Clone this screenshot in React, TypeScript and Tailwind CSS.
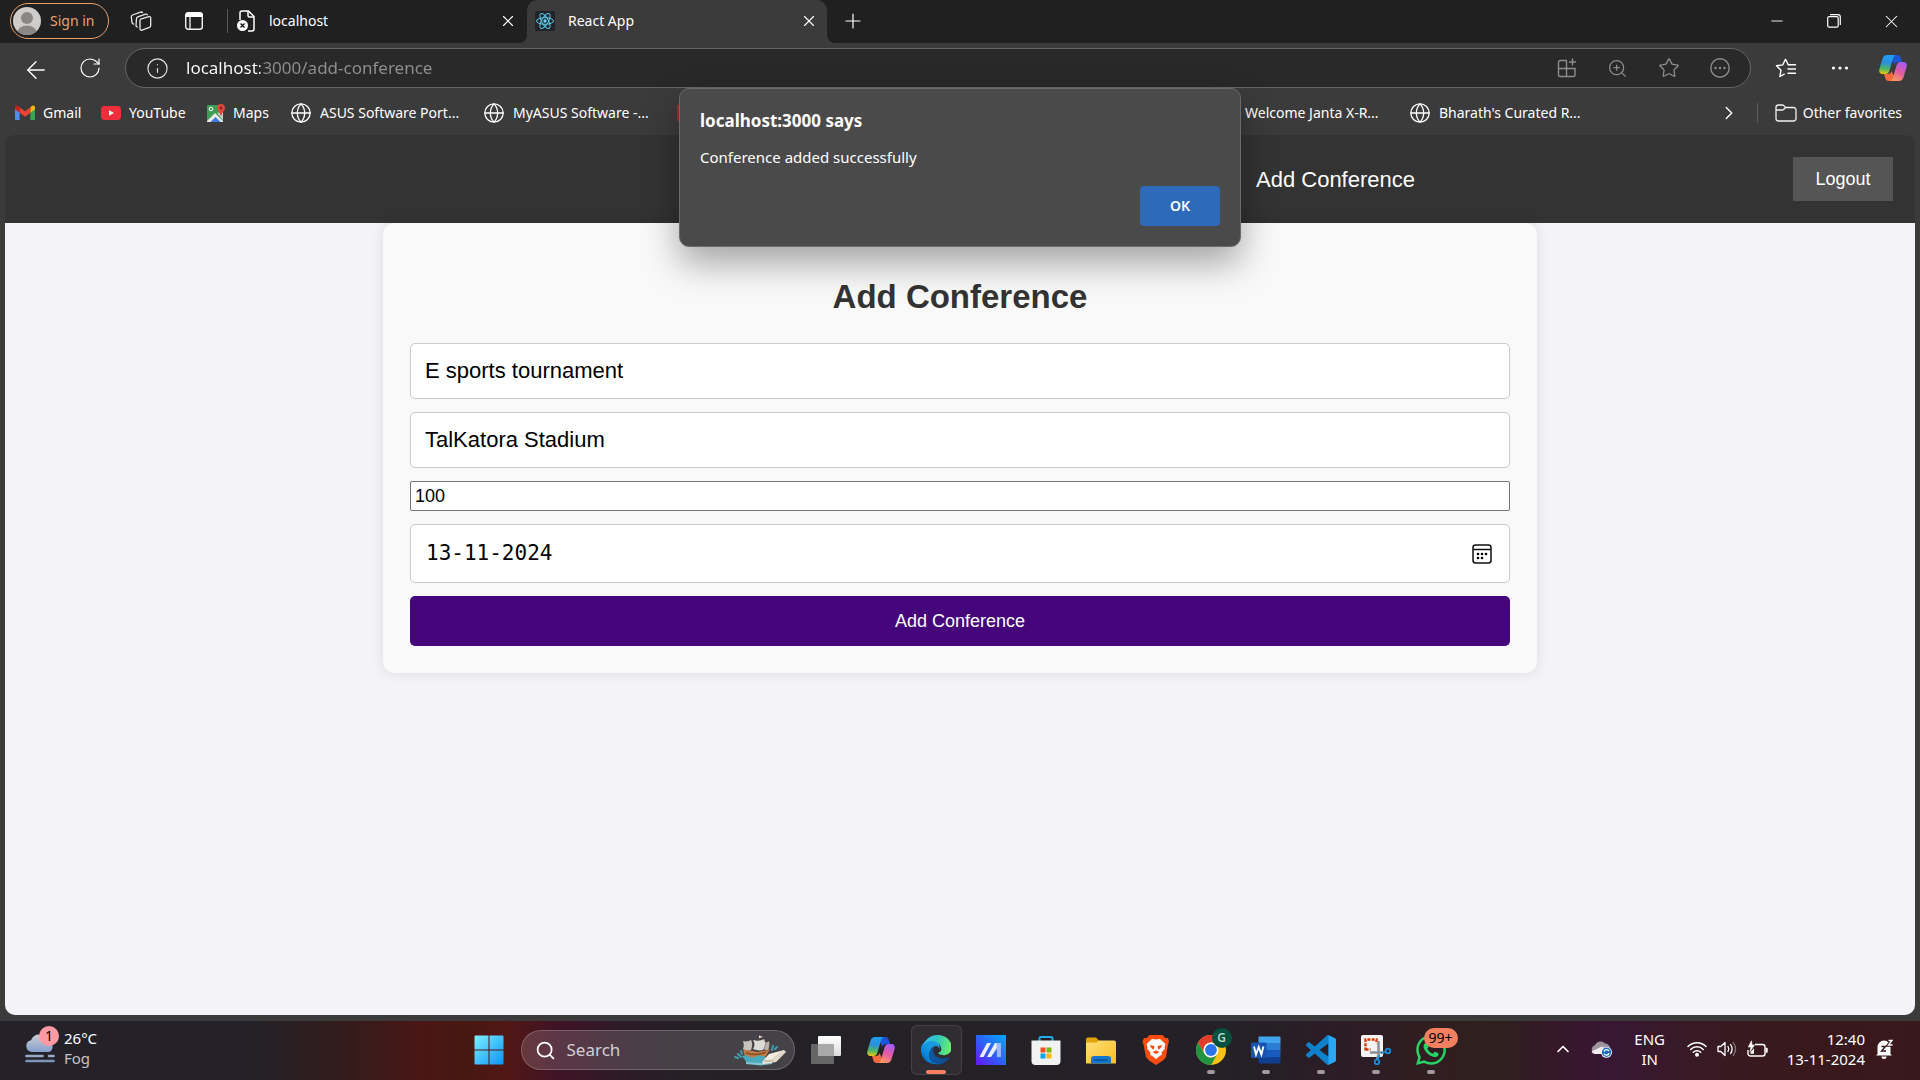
import React, { useId, useState } from "react";
import {
  ArrowLeft,
  ChevronRight,
  ChevronUp,
  Globe,
  Info,
  Minus,
  Plus,
  RotateCw,
  Search,
  Star,
  X,
  ZoomIn,
} from "lucide-react";
import { SiWhatsapp } from "react-icons/si";

/* ---------- browser icons ---------- */

function AvatarIcon() {
  return (
    <svg viewBox="0 0 28 28" className="size-7" aria-hidden="true">
      <defs>
        <clipPath id="avatar">
          <circle cx="14" cy="14" r="14" />
        </clipPath>
      </defs>
      <g clipPath="url(#avatar)">
        <rect width="28" height="28" fill="#cfcdcb" />
        <circle cx="14" cy="11" r="6" fill="#8a8886" />
        <ellipse cx="14" cy="26" rx="10" ry="7.5" fill="#8a8886" />
      </g>
    </svg>
  );
}

function WorkspacesIcon() {
  return (
    <svg viewBox="0 0 22 22" className="size-[22px]" fill="none" stroke="#e8e8e8" strokeWidth="1.3" strokeLinejoin="round" strokeLinecap="round" aria-hidden="true">
      <path d="M10.6 9.2 18.8 6.6c1-.3 1.9.3 1.9 1.3v7.7c0 .8-.5 1.5-1.2 1.7l-7.5 2.8c-1 .4-2-.2-2-1.3v-7.7c0-.9.2-1.6.6-1.9Z" />
      <path d="M7.2 16.9c-.8-.1-1.3-.8-1.2-1.7l.5-6.7c.1-.8.6-1.4 1.4-1.7l7.6-2.7c.9-.2 1.5.1 1.8.7" />
      <path d="M3.6 14.2c-.8-.2-1.5-.9-1.6-1.8L1.3 6.9c-.1-.9.4-1.6 1.2-1.9l8-2.9c1-.3 1.7 0 2.1.5" />
    </svg>
  );
}

function TabActionsIcon() {
  return (
    <svg viewBox="0 0 20 20" className="size-5" aria-hidden="true">
      <rect x="1.7" y="1.7" width="16.6" height="16.6" rx="2.5" fill="none" stroke="#f2f2f2" strokeWidth="1.4" />
      <path d="M1.5 3.5a2 2 0 0 1 2-2h13a2 2 0 0 1 2 2V6h-17Z" fill="#fff" />
      <path d="M6 6v12" stroke="#f2f2f2" strokeWidth="1.3" />
    </svg>
  );
}

function BrokenPageIcon() {
  return (
    <svg viewBox="0 0 20 22" className="h-[22px] w-5" fill="none" aria-hidden="true">
      <path d="M4 10V3a2 2 0 0 1 2-2h6.5L18 6.5V19a2 2 0 0 1-2 2h-4" stroke="#fff" strokeWidth="1.5" />
      <path d="M12 1v4.5c0 .8.6 1.5 1.5 1.5H18" stroke="#fff" strokeWidth="1.5" />
      <circle cx="6.5" cy="15.5" r="5.5" fill="#fff" />
      <path d="m4.5 13.5 4 4m0-4-4 4" stroke="#202020" strokeWidth="1.5" />
    </svg>
  );
}

function ReactIcon() {
  return (
    <svg viewBox="0 0 20 20" className="size-5" aria-hidden="true">
      <rect width="20" height="20" rx="1.5" fill="#20232a" />
      <g fill="none" stroke="#61c9e8" strokeWidth="1">
        <ellipse cx="10" cy="10" rx="8.5" ry="3.3" />
        <ellipse cx="10" cy="10" rx="8.5" ry="3.3" transform="rotate(60 10 10)" />
        <ellipse cx="10" cy="10" rx="8.5" ry="3.3" transform="rotate(120 10 10)" />
      </g>
      <circle cx="10" cy="10" r="1.7" fill="#61dafb" />
    </svg>
  );
}

function AppsPlusIcon() {
  return (
    <svg viewBox="0 0 20 20" className="size-5" fill="none" stroke="#8d8d8d" strokeWidth="1.4" strokeLinecap="round" aria-hidden="true">
      <path d="M9.5 2.5H3a1.5 1.5 0 0 0-1.5 1.5v13A1.5 1.5 0 0 0 3 18.5h13.5A1.5 1.5 0 0 0 18 17v-6.500H1.5M9.5 2.5v16M15.5 1v6M12.5 4h6" />
    </svg>
  );
}

function CircleDotsIcon() {
  return (
    <svg viewBox="0 0 20 20" className="size-5" fill="none" aria-hidden="true">
      <circle cx="10" cy="10" r="9.2" stroke="#8d8d8d" strokeWidth="1.4" />
      <g fill="#8d8d8d">
        <circle cx="5.500" cy="10" r="1.2" />
        <circle cx="10" cy="10" r="1.2" />
        <circle cx="14.5" cy="10" r="1.2" />
      </g>
    </svg>
  );
}

function FavoritesIcon() {
  return (
    <svg viewBox="0 0 22 20" className="h-5 w-[22px]" fill="none" stroke="#fff" strokeWidth="1.4" strokeLinejoin="round" strokeLinecap="round" aria-hidden="true">
      <path d="M13.3 6.7 10.5 1.3 7.7 6.9 1.5 7.8 6 12.2 4.9 18.5 9.2 16.2" />
      <path d="M13.3 6.7h7.2M13 11h7.5M13 15.2h7.5" />
    </svg>
  );
}

function MoreIcon() {
  return (
    <svg viewBox="0 0 20 20" className="size-5" fill="#fff" aria-hidden="true">
      <circle cx="3.5" cy="10" r="1.6" />
      <circle cx="10" cy="10" r="1.6" />
      <circle cx="16.5" cy="10" r="1.6" />
    </svg>
  );
}

function CopilotIcon() {
  const id = useId();
  return (
    <svg viewBox="0 0 28 26" className="h-[26px] w-7" aria-hidden="true">
      <defs>
        <linearGradient id={id + "a"} x1="0.4" y1="0" x2="0.3" y2="1">
          <stop offset="0" stopColor="#1fa0ee" />
          <stop offset="0.4" stopColor="#2a8ee0" />
          <stop offset="0.75" stopColor="#55b95a" />
          <stop offset="1" stopColor="#f2c811" />
        </linearGradient>
        <linearGradient id={id + "b"} x1="0.7" y1="0" x2="0.3" y2="1">
          <stop offset="0" stopColor="#a55cf0" />
          <stop offset="0.5" stopColor="#e45aa5" />
          <stop offset="1" stopColor="#fb9a5c" />
        </linearGradient>
      </defs>
      <path d="M14 0h4.5c1.7 0 2.7 1 3.2 2.7L23 7h-4c-2 0-3 1-3.5 3L13 5Z" fill="#1b55d8" />
      <path d="M14 26H9.5c-1.7 0-2.7-1-3.2-2.7L5 19h4c2 0 3-1 3.5-3l2.5 5Z" fill="#f26a3d" />
      <path d="M8 0h9c-1.8.2-2.4 1.5-3 3.5l-3.5 12C9.8 18 8.5 19 6.5 19H3.5C.8 19-.3 16.7.4 14L3.6 3.5C4.3 1.3 5.7 0 8 0Z" fill={`url(#${id}a)`} />
      <path d="M20 26h-9c1.8-.2 2.4-1.5 3-3.5l3.5-12C18.2 8 19.5 7 21.5 7h3c2.7 0 3.8 2.3 3.1 5l-3.2 10.5c-.7 2.2-2.1 3.5-4.4 3.5Z" fill={`url(#${id}b)`} />
    </svg>
  );
}

function RestoreIcon() {
  return (
    <svg viewBox="0 0 14 14" className="size-3.5" fill="none" stroke="#fff" strokeWidth="1.2" aria-hidden="true">
      <rect x="0.7" y="2.7" width="10.5" height="10.5" rx="1.5" />
      <path d="M3 .7h8a2.3 2.3 0 0 1 2.3 2.3v8" />
    </svg>
  );
}

function GmailIcon() {
  return (
    <svg viewBox="0 0 20 15" className="h-[15px] w-5" aria-hidden="true">
      <path d="M0 2.5V14a1 1 0 0 0 1 1h3.6V6Z" fill="#4f8df5" />
      <path d="M20 2.5V14a1 1 0 0 1-1 1h-3.6V6Z" fill="#34a853" />
      <path d="M15.4 2.2 17 1c1.3-.9 3-.1 3 1.5v1.7L15.4 7.7Z" fill="#fbbc04" />
      <path d="M4.6 2.2 3 1C1.7.1 0 .9 0 2.5v1.7l4.6 3.5Z" fill="#c5221f" />
      <path d="M4.6 2.2 10 6.3l5.4-4.1v5.5L10 11.8 4.6 7.7Z" fill="#ea4335" />
    </svg>
  );
}

function YouTubeIcon() {
  return (
    <svg viewBox="0 0 20 14" className="h-3.5 w-5" aria-hidden="true">
      <rect width="20" height="14" rx="3.5" fill="#ee2f3b" />
      <path d="m8 4.2 5 2.8-5 2.8Z" fill="#fff" />
    </svg>
  );
}

function MapsIcon() {
  return (
    <svg viewBox="0 0 18 18" className="size-[18px]" aria-hidden="true">
      <rect y="1" width="16" height="17" rx="1" fill="#3f9b55" />
      <path d="m0 17 8-8 8 8v1H0Z" fill="#e8e8e8" />
      <path d="m3.5 18 5-5 5 5Z" fill="#3d78e0" />
      <path d="m10 9 6 7V8Z" fill="#cfd3d6" />
      <circle cx="4" cy="5" r="1.8" fill="none" stroke="#fff" />
      <path d="M14 0a4 4 0 0 1 4 4c0 2.5-3 4-3.6 8h-.8C13 8 10 6.500 10 4a4 4 0 0 1 4-4Z" fill="#e0483c" />
      <circle cx="14" cy="4" r="1.4" fill="#8f231b" />
    </svg>
  );
}

function FolderOutlineIcon() {
  return (
    <svg viewBox="0 0 22 20" className="h-5 w-[22px]" fill="none" stroke="#f2f2f2" strokeWidth="1.3" strokeLinejoin="round" aria-hidden="true">
      <path d="M1 4.500A2.500 2.500 0 0 1 3.500 2h3.800c.6 0 1.100.2 1.500.6L10.700 4.500h7.800A2.500 2.500 0 0 1 21 7v8.500a2.500 2.500 0 0 1-2.500 2.500h-15A2.500 2.500 0 0 1 1 15.500ZM1 7h6c.7 0 1.300-.2 1.800-.7l1.900-1.800" />
    </svg>
  );
}

function CalendarIcon() {
  return (
    <svg viewBox="0 0 20 20" className="size-5" aria-hidden="true">
      <rect x="1" y="1" width="18" height="18" rx="2.5" fill="none" stroke="#111" strokeWidth="1.5" />
      <path d="M1 5.500h18" stroke="#111" strokeWidth="1.5" />
      <g fill="#000">
        <circle cx="6" cy="10" r="1.3" />
        <circle cx="10" cy="10" r="1.3" />
        <circle cx="14" cy="10" r="1.3" />
        <circle cx="6" cy="14" r="1.3" />
        <circle cx="10" cy="14" r="1.3" />
      </g>
    </svg>
  );
}

/* ---------- taskbar icons ---------- */

function FogIcon() {
  return (
    <svg viewBox="0 0 30 30" className="size-[30px]" aria-hidden="true">
      <defs>
        <linearGradient id="cloud" x1="0" y1="0" x2="0" y2="1">
          <stop offset="0" stopColor="#c9cdd2" />
          <stop offset="1" stopColor="#86a1cf" />
        </linearGradient>
      </defs>
      <path d="M6.500 19A6 6 0 0 1 6 7.200 9 9 0 0 1 23 8a5.800 5.800 0 0 1 1 11Z" fill="url(#cloud)" />
      <path d="M1.500 23h16M24 23h4.500" stroke="#97a9c2" strokeWidth="2.6" strokeLinecap="round" />
      <path d="M1.500 28h27" stroke="#7f93bd" strokeWidth="2.6" strokeLinecap="round" />
    </svg>
  );
}

function StartIcon() {
  return (
    <svg viewBox="0 0 30 30" className="size-[30px]" aria-hidden="true">
      <defs>
        <linearGradient id="win" x1="0" y1="0" x2="1" y2="1">
          <stop offset="0" stopColor="#7df0ff" />
          <stop offset="1" stopColor="#0b93fb" />
        </linearGradient>
      </defs>
      <path d="M1.500.5H14.500v14H.5v-13a1 1 0 0 1 1-1ZM15.500.5h13a1 1 0 0 1 1 1v13h-14ZM.5 15.500H14.500v14H1.500a1 1 0 0 1-1-1ZM15.500 15.500h14v13a1 1 0 0 1-1 1h-13Z" fill="url(#win)" />
    </svg>
  );
}

function ShipIcon() {
  return (
    <svg viewBox="0 0 52 32" className="h-8 w-[52px]" aria-hidden="true">
      <path d="M9 15 11 23c3 3 17 3 21-1l4-7-12 3Z" fill="#c07a42" />
      <path d="M12 19c6 2 14 2 20-1" stroke="#8a4f27" strokeWidth="1.5" fill="none" />
      <path d="M25 2v16M14 7v11M33 7v10" stroke="#6b4a32" strokeWidth="1" />
      <path d="M25 1.500 29 3l-4 1Z" fill="#eee" />
      <path d="M19 6c4 1 8 1 11-1 2 4 1 8-1 11-4 1-7 0-10-1 2-3 2-6 0-9Z" fill="#ddd9d4" />
      <path d="M9 7c3 1 6 0 8-1 2 4 1 7 0 10-3 1-5 0-8-1 1-3 1-5 0-8Z" fill="#c9c3bd" />
      <path d="M31 8c2 1 3 0 4-1 1 4 0 6-1 9-2 0-3 0-4-1 1-3 2-4 1-7Z" fill="#b9b1aa" />
      <path d="M8 22c6-3 8 3 13 1 4-3 9-1 12 1l-6 6-14-1Z" fill="#4aa9bd" />
      <path d="m4 20 3 3M1 23l3 1M7 17l1 3M38 16l1-4M41 15l2-2" stroke="#3f9fb5" strokeWidth="2" strokeLinecap="round" />
      <path d="m12 28 16 1 10-1v2l-11 1.500-15-1.500Z" fill="#7fc4cf" />
      <path d="m28 28 7-8 15-4 2 2-10 10-13 2Z" fill="#f1ece0" />
      <path d="m30 28 10-1 11-9M29 27l9-1 11-9" stroke="#b9ad97" strokeWidth=".8" fill="none" />
    </svg>
  );
}

function TaskViewIcon() {
  return (
    <svg viewBox="0 0 30 28" className="h-7 w-[30px]" aria-hidden="true">
      <defs>
        <linearGradient id="tv" x1="0" y1="0" x2="0" y2="1">
          <stop offset="0" stopColor="#ffffff" />
          <stop offset="1" stopColor="#dcdcdc" />
        </linearGradient>
      </defs>
      <rect y="8" width="23" height="20" rx="1" fill="#666" />
      <rect x="7" width="23" height="20" rx="1" fill="url(#tv)" />
      <path d="M7 8h16v12H7Z" fill="#a9a9a9" />
    </svg>
  );
}

function EdgeIcon() {
  return (
    <svg viewBox="0 0 256 256" className="size-[30px]" aria-hidden="true">
      <defs>
        <linearGradient id="edgeA" x1="63" y1="177" x2="241" y2="177" gradientUnits="userSpaceOnUse">
          <stop offset="0" stopColor="#0c59a4" />
          <stop offset="1" stopColor="#114a8b" />
        </linearGradient>
        <linearGradient id="edgeB" x1="157" y1="99" x2="46" y2="220" gradientUnits="userSpaceOnUse">
          <stop offset="0" stopColor="#1b9de2" />
          <stop offset="0.5" stopColor="#1595df" />
          <stop offset="1" stopColor="#0078d4" />
        </linearGradient>
        <linearGradient id="edgeC" x1="20" y1="60" x2="245" y2="110" gradientUnits="userSpaceOnUse">
          <stop offset="0" stopColor="#35c1f1" />
          <stop offset="0.45" stopColor="#2ec4c5" />
          <stop offset="1" stopColor="#66eb6e" />
        </linearGradient>
      </defs>
      <path d="M231 190c-3 2-7 3-10 5-11 4-22 6-34 6-45 0-84-31-84-70 0-11 6-21 16-26-41 2-51 44-51 69 0 71 65 78 79 78 8 0 19-2 26-4l1-1c29-9 53-28 69-53a3 3 0 0 0-4-4Z" fill="url(#edgeA)" />
      <path d="M106 241c-9-5-17-12-23-21-27-36-19-88 17-115 4-3 8-5 12-7 3-1 8-4 15-4a30 30 0 0 1 24 12c3 5 6 11 6 17 0-1 25-79-79-79-44 0-80 41-80 78 0 19 4 37 12 54 27 57 92 84 151 65-20 6-39 3-55 0Z" fill="url(#edgeB)" />
      <path d="M152 149c-1 1-4 3-4 6 0 3 2 6 5 8 16 11 45 9 45 9 12 0 23-3 33-9 20-11 32-33 32-56 0-24-8-39-12-46C229 20 186 0 139 0 73 0 19 53 11 118c1-37 37-67 80-67 3 0 23 1 42 10 17 9 26 20 32 30 6 11 8 25 8 30s-3 14-9 21Z" fill="url(#edgeC)" />
    </svg>
  );
}

function AsusIcon() {
  return (
    <svg viewBox="0 0 30 30" className="size-[30px]" aria-hidden="true">
      <defs>
        <linearGradient id="asus" x1="0" y1="1" x2="1" y2="0">
          <stop offset="0" stopColor="#6714f5" />
          <stop offset="0.5" stopColor="#2c63f8" />
          <stop offset="1" stopColor="#08a8ff" />
        </linearGradient>
      </defs>
      <rect width="30" height="30" fill="url(#asus)" />
      <path d="M3.500 22 11 8h4L7.500 22ZM11 22l8-14h5.500v14h-3.500v-9l-6 9Z" fill="#e9efff" />
      <path d="M20.500 8h4v14h-3.500Z" fill="#9eb8fb" />
    </svg>
  );
}

function StoreIcon() {
  return (
    <svg viewBox="0 0 30 30" className="size-[30px]" aria-hidden="true">
      <path d="M8.500 7V3.500a1.500 1.500 0 0 1 1.500-1.500h10a1.500 1.500 0 0 1 1.500 1.500V7" fill="none" stroke="#23aee8" strokeWidth="2" />
      <path d="M.5 5.500h29V26a4 4 0 0 1-4 4h-21a4 4 0 0 1-4-4Z" fill="#f2f2f2" />
      <path d="M9.500 12.500h5v5h-5Z" fill="#f25022" />
      <path d="M15.500 12.500h5v5h-5Z" fill="#7fba00" />
      <path d="M9.500 18.500h5v5h-5Z" fill="#00a4ef" />
      <path d="M15.500 18.500h5v5h-5Z" fill="#ffb900" />
    </svg>
  );
}

function ExplorerIcon() {
  return (
    <svg viewBox="0 0 30 28" className="h-7 w-[30px]" aria-hidden="true">
      <defs>
        <linearGradient id="folder" x1="0" y1="0" x2="1" y2="1">
          <stop offset="0" stopColor="#ffdf7a" />
          <stop offset="1" stopColor="#f9bd20" />
        </linearGradient>
      </defs>
      <path d="M0 3.500A2 2 0 0 1 2 1.500h8l3 3V8H0Z" fill="#e0a30c" />
      <path d="M0 6.500h10.500L13 4.500h15a2 2 0 0 1 2 2V27.500H0Z" fill="url(#folder)" />
      <path d="M5 27.500V23a3 3 0 0 1 3-3h14a3 3 0 0 1 3 3v4.500Z" fill="#1277cf" />
      <path d="M8.500 24h13" stroke="#0b4f96" strokeWidth="1.3" strokeLinecap="round" />
    </svg>
  );
}

function BraveIcon() {
  return (
    <svg viewBox="0 0 30 30" className="size-[30px]" aria-hidden="true">
      <path d="M8.500 0h13l3 3.200 2.500-.2 1 3.500-1 3L25 22l-3 3.500L15 30l-7-4.500L5 22 2.500 9.500l-1-3L3 3l2.500.2Z" fill="#fb4d12" />
      <path d="M15 4.500 19 4l5.500 5-1 3 .5 1.500-3.500 4 .5 2-3 2L15 24l-3-2.500-3-2 .5-2-3.500-4 .5-1.500-1-3L11 4Z" fill="#fff" />
      <path d="m8.500 10 5 1-1 4-2-2ZM21.500 10l-5 1 1 4 2-2ZM11.500 17l3.500-1.500 3.500 1.500L15 19Z" fill="#fb4d12" />
    </svg>
  );
}

function ChromeIcon() {
  return (
    <svg viewBox="0 0 30 30" className="size-[30px]" aria-hidden="true">
      <circle cx="15" cy="15" r="15" fill="#fbc116" />
      <path d="M2 7.500A15 15 0 0 1 28 7.500H15a7.500 7.500 0 0 0-6.500 11.250Z" fill="#e33b2e" />
      <path d="M2 7.500 8.500 18.750A7.500 7.500 0 0 0 15 22.500q3 0 6.500-3.750L15 30A15 15 0 0 1 2 7.500Z" fill="#229342" />
      <circle cx="15" cy="15" r="7.500" fill="#fff" />
      <circle cx="15" cy="15" r="5.900" fill="#2a73e8" />
    </svg>
  );
}

function WordIcon() {
  return (
    <svg viewBox="0 0 30 28" className="h-7 w-[30px]" aria-hidden="true">
      <path d="M7.500.5H28.500a1 1 0 0 1 1 1V7H7.500Z" fill="#41a5ee" />
      <path d="M7.500 7h22v7h-22Z" fill="#2b7cd3" />
      <path d="M7.500 14h22v7h-22Z" fill="#185abd" />
      <path d="M7.500 21h22v5.500a1 1 0 0 1-1 1h-20a1 1 0 0 1-1-1Z" fill="#103f91" />
      <rect y="6.500" width="15.500" height="15.500" rx="1.3" fill="#1a52b0" />
      <path d="m3 10.500 2 8 2.700-7.500 2.700 7.500 2-8" fill="none" stroke="#fff" strokeWidth="1.9" />
    </svg>
  );
}

function CodeIcon() {
  return (
    <svg viewBox="0 0 24 24" className="size-[30px]" aria-hidden="true">
      <path d="M23.150 2.587L18.210.21a1.494 1.494 0 0 0-1.705.29l-9.460 8.630-4.120-3.128a.999.999 0 0 0-1.276.057L.327 7.261A1 1 0 0 0 .326 8.740L3.899 12 .326 15.260a1 1 0 0 0 .001 1.479L1.650 17.940a.999.999 0 0 0 1.276.057l4.120-3.128 9.460 8.630a1.492 1.492 0 0 0 1.704.29l4.942-2.377A1.500 1.500 0 0 0 24 20.060V3.939a1.500 1.500 0 0 0-.85-1.352zm-5.146 14.861L10.826 12l7.178-5.448v10.896z" fill="#0f82cb" />
      <path d="M18 .2 23.150 2.587A1.500 1.500 0 0 1 24 3.939V20.060a1.500 1.500 0 0 1-.85 1.352L18 23.800Z" fill="#2aa6f2" />
    </svg>
  );
}

function SnipIcon() {
  return (
    <svg viewBox="0 0 30 30" className="size-[30px]" fill="none" aria-hidden="true">
      <rect width="22" height="22" rx="2" fill="#f3f3f3" />
      <path d="M4.500 15.500v-11h11v4M4.500 14.500h5" stroke="#d83b01" strokeWidth="2.4" strokeDasharray="3 1.3" />
      <path d="M17.500 6v14l-1.500 4M9 17.500h14" stroke="#8b9197" strokeWidth="2.500" />
      <circle cx="16" cy="27" r="2.3" stroke="#1490df" strokeWidth="1.8" />
      <circle cx="27" cy="16" r="2.3" stroke="#1490df" strokeWidth="1.8" />
      <path d="m17 24 1.500-4M24.500 16.500 20 18" stroke="#1490df" strokeWidth="1.8" />
    </svg>
  );
}

function OneDriveIcon() {
  return (
    <svg viewBox="0 0 22 18" className="h-[18px] w-[22px]" fill="none" aria-hidden="true">
      <path d="M5 14A4.500 4.500 0 0 1 4 5.200 6 6 0 0 1 14 3.500a5 5 0 0 1 5 5L9 14Z" fill="#9d949c" />
      <path d="M4 14a4 4 0 0 1-3.500-2.500L11 6.500 16 10v4Z" fill="#f0eef0" />
      <circle cx="15.500" cy="12.300" r="5.500" fill="#fff" />
      <circle cx="15.500" cy="12.300" r="4.700" fill="#1b6ec2" />
      <path d="M13 11.500a2.700 2.700 0 0 1 5-.5M18 13.200a2.700 2.700 0 0 1-5 .5" stroke="#fff" strokeWidth="1.3" />
    </svg>
  );
}

function WifiIcon() {
  return (
    <svg viewBox="0 0 20 16" className="h-4 w-5" fill="none" stroke="#fff" strokeWidth="1.5" strokeLinecap="round" aria-hidden="true">
      <path d="M1 5.500a12.500 12.500 0 0 1 18 0M3.700 8.500a8.700 8.700 0 0 1 12.600 0M6.300 11.300a5.200 5.200 0 0 1 7.400 0" />
      <circle cx="10" cy="13.800" r="1.2" fill="#fff" />
    </svg>
  );
}

function VolumeIcon() {
  return (
    <svg viewBox="0 0 20 16" className="h-4 w-5" fill="none" stroke="#fff" strokeWidth="1.3" strokeLinecap="round" strokeLinejoin="round" aria-hidden="true">
      <path d="M1 5.500h2.800L8 1.500v13L3.800 10.500H1Z" />
      <path d="M11 5.500q1.600 2.500 0 5M13.600 3.500q3 4.500 0 9" />
      <path d="M16.300 1.500q4.500 6.500 0 13" stroke="#8b7880" />
    </svg>
  );
}

function BatteryIcon() {
  return (
    <svg viewBox="0 0 21 18" className="h-[18px] w-[21px]" fill="none" stroke="#fff" strokeWidth="1.4" strokeLinejoin="round" aria-hidden="true">
      <path d="M8 4.500h7.500A2.500 2.500 0 0 1 18 7v6.500a2.500 2.500 0 0 1-2.500 2.500h-12A2.500 2.500 0 0 1 1 13.500V10" />
      <path d="M18.700 8.500h1.300v3.500h-1.300" fill="#fff" />
      <path d="M4.500.8 1.300 7H4l-1 4.500L7.500 5H5Z" fill="#fff" strokeWidth="0.6" />
      <path d="M3.500 13.800V12L7 8.500v5.300Z" fill="#fff" stroke="none" />
    </svg>
  );
}

function BellIcon() {
  return (
    <svg viewBox="0 0 18 20" className="h-5 w-[18px]" aria-hidden="true">
      <path d="M1.500 15V8a6.500 6.500 0 0 1 13 0v7l1.500 1.500H0ZM5.500 17.500h5a2.500 2.500 0 0 1-5 0Z" fill="#fff" />
      <path d="M12.500 1.500H16l-3.500 4.500h4" fill="none" stroke="#351a1e" strokeWidth="3.4" />
      <path d="M5.500 7.500h4L5.500 12h4.500" fill="none" stroke="#351a1e" strokeWidth="1.4" />
      <path d="M12.500 1.500H16l-3.500 4.500h4" fill="none" stroke="#fff" strokeWidth="1.3" />
    </svg>
  );
}

/* ---------- browser chrome ---------- */

function TabStrip() {
  return (
    <header className="flex h-[43px] shrink-0 items-center bg-[#202020] pb-px text-sm text-white">
      <button className="ml-2.5 flex h-9 w-[99px] items-center gap-[9px] rounded-full border border-[#e8a26c] pl-0.5 text-[#e8a26c]">
        <AvatarIcon />
        Sign in
      </button>
      <button aria-label="Workspaces" className="ml-5 grid size-6 place-items-center">
        <WorkspacesIcon />
      </button>
      <button aria-label="Tab actions" className="ml-[29px] grid size-6 place-items-center">
        <TabActionsIcon />
      </button>
      <span className="ml-[21px] h-6 w-px bg-[#5a5a5a]" />
      <div className="flex w-[299px] items-center pr-[9px] pl-2">
        <BrokenPageIcon />
        <button className="ml-[13px] flex-1 text-left">localhost</button>
        <button aria-label="Close localhost tab" className="grid size-5 place-items-center">
          <X size={18} strokeWidth={1.5} />
        </button>
      </div>
      <div className="relative flex h-[43px] w-[300px] items-center rounded-t-[10px] bg-[#3b3b3b] px-2">
        <svg viewBox="0 0 8 8" className="absolute bottom-0 -left-2 size-2" aria-hidden="true">
          <path d="M8 0v8H0a8 8 0 0 0 8-8Z" fill="#3b3b3b" />
        </svg>
        <svg viewBox="0 0 8 8" className="absolute -right-2 bottom-0 size-2" aria-hidden="true">
          <path d="M0 0v8h8a8 8 0 0 1-8-8Z" fill="#3b3b3b" />
        </svg>
        <ReactIcon />
        <button className="ml-[13px] flex-1 text-left">React App</button>
        <button aria-label="Close React App tab" className="grid size-5 place-items-center">
          <X size={18} strokeWidth={1.5} />
        </button>
      </div>
      <button aria-label="New tab" className="ml-3.5 grid size-6 place-items-center">
        <Plus size={24} strokeWidth={1.2} />
      </button>
      <div className="ml-auto flex h-full">
        <button aria-label="Minimize" className="grid w-[57px] place-items-center">
          <Minus size={18} strokeWidth={1.2} />
        </button>
        <button aria-label="Restore" className="grid w-[57px] place-items-center">
          <RestoreIcon />
        </button>
        <button aria-label="Close" className="grid w-[58px] place-items-center">
          <X size={21} strokeWidth={1.2} />
        </button>
      </div>
    </header>
  );
}

function Toolbar() {
  return (
    <div className="flex h-[50px] shrink-0 items-center text-white">
      <button aria-label="Back" className="ml-[22px] grid size-6 place-items-center">
        <ArrowLeft size={28} strokeWidth={1.2} />
      </button>
      <button aria-label="Refresh" className="ml-8 grid size-6 place-items-center">
        <RotateCw size={24} strokeWidth={1.2} />
      </button>
      <div className="ml-[23px] flex h-10 flex-1 items-center rounded-full border border-[#666] bg-[#292929] pr-5 pl-5 text-[#8d8d8d]">
        <button aria-label="Site information" className="text-[#e4e4e4]">
          <Info size={23} strokeWidth={1.2} />
        </button>
        <input
          aria-label="Address"
          defaultValue="localhost:3000/add-conference"
          className="ml-[17px] flex-1 bg-[linear-gradient(90deg,#fff_74px,#8f8f8f_74px)] bg-clip-text text-[17px] text-transparent outline-none"
        />
        <div className="flex items-center gap-[30px]">
          <button aria-label="App available">
            <AppsPlusIcon />
          </button>
          <button aria-label="Zoom">
            <ZoomIn size={21} strokeWidth={1.4} />
          </button>
          <button aria-label="Add to favorites">
            <Star size={22} strokeWidth={1.4} />
          </button>
          <button aria-label="More page actions">
            <CircleDotsIcon />
          </button>
        </div>
      </div>
      <button aria-label="Favorites" className="ml-6">
        <FavoritesIcon />
      </button>
      <button aria-label="Settings and more" className="ml-[33px]">
        <MoreIcon />
      </button>
      <button aria-label="Copilot" className="mr-[13px] ml-[29px]">
        <CopilotIcon />
      </button>
    </div>
  );
}

function Bookmark({ icon, label, width }: { icon: React.ReactNode; label: string; width: string }) {
  return (
    <a href="#" className={`flex shrink-0 items-center gap-2 whitespace-nowrap ${width}`}>
      {icon}
      {label}
    </a>
  );
}

function BookmarksBar() {
  const globe = <Globe size={22} strokeWidth={1.4} className="shrink-0" />;
  return (
    <nav aria-label="Favorites bar" className="flex h-[42px] shrink-0 items-center pr-[18px] pb-[3px] pl-[15px] text-sm text-white">
      <Bookmark icon={<GmailIcon />} label="Gmail" width="w-[86px]" />
      <Bookmark icon={<YouTubeIcon />} label="YouTube" width="w-[106px]" />
      <Bookmark icon={<MapsIcon />} label="Maps" width="w-[83px]" />
      <Bookmark icon={globe} label="ASUS Software Port..." width="w-[193px]" />
      <Bookmark icon={globe} label="MyASUS Software -..." width="w-[194px]" />
      <span className="h-4 w-5 shrink-0 bg-[#a52a2a]" />
      <span className="w-[518px] shrink-0" />
      <Bookmark icon={globe} label="Welcome Janta X-R..." width="w-[194px]" />
      <Bookmark icon={globe} label="Bharath's Curated R..." width="w-[193px]" />
      <button aria-label="Show more favorites" className="ml-auto">
        <ChevronRight size={22} strokeWidth={1.5} />
      </button>
      <span className="mx-[17px] h-5 w-px bg-[#5c5c5c]" />
      <button className="flex items-center gap-1.5">
        <FolderOutlineIcon />
        Other favorites
      </button>
    </nav>
  );
}

/* ---------- page ---------- */

function SiteNav() {
  return (
    <nav aria-label="Site" className="flex h-[88px] shrink-0 items-center justify-between bg-[#333] pr-[22px] text-white">
      <div className="flex w-3/4 justify-end pr-1.5">
        <a href="#" className="text-[22px]">
          Add Conference
        </a>
      </div>
      <button className="h-11 w-[100px] bg-[#555] text-lg">Logout</button>
    </nav>
  );
}

function ConferenceForm() {
  const field = "w-full rounded-[5px] border border-[#ccc] bg-white px-3.5 text-[22px] text-black";
  return (
    <form
      onSubmit={(e) => e.preventDefault()}
      className="mx-auto flex w-full max-w-[1154px] flex-col gap-[13px] rounded-xl bg-[#f9f9f9] px-[27px] pb-[27px] shadow-[0_0_14px_rgba(0,0,0,0.1)]"
    >
      <h1 className="pt-[54px] pb-[13px] text-center text-[33px] leading-10 font-bold text-[#333]">Add Conference</h1>
      <input aria-label="Conference name" defaultValue="E sports tournament" className={`${field} h-14`} />
      <input aria-label="Location" defaultValue="TalKatora Stadium" className={`${field} h-14`} />
      <input
        aria-label="Price"
        type="number"
        defaultValue="100"
        className="h-[30px] w-full rounded-xs border border-[#767676] bg-white px-1 text-lg text-black"
      />
      <div className="flex h-[59px] items-center rounded-[5px] border border-[#ccc] bg-white pr-[17px] pl-[15px]">
        <input
          aria-label="Date"
          defaultValue="13-11-2024"
          className="min-w-0 flex-1 font-['DejaVu_Sans_Mono','Liberation_Mono',monospace] text-[21px] text-black outline-none"
        />
        <button type="button" aria-label="Open calendar">
          <CalendarIcon />
        </button>
      </div>
      <button className="h-[50px] rounded-[5px] bg-[#44067a] text-lg text-white">Add Conference</button>
    </form>
  );
}

function AlertDialog({ onClose }: { onClose: () => void }) {
  return (
    <div
      role="alertdialog"
      aria-labelledby="alert-title"
      aria-describedby="alert-message"
      className="absolute top-[88px] left-1/2 flex w-[562px] -translate-x-1/2 flex-col rounded-[10px] border border-[#6b6b6b] bg-[#4a4a4a] p-5 text-white shadow-[0_16px_36px_rgba(0,0,0,0.35)]"
    >
      <h2 id="alert-title" className="text-[17px] leading-6 font-bold">
        localhost:3000 says
      </h2>
      <p id="alert-message" className="mt-3 text-[15px] leading-6">
        Conference added successfully
      </p>
      <button onClick={onClose} className="mt-[17px] h-10 w-20 self-end rounded bg-[#2d6aba] text-sm font-semibold">
        OK
      </button>
    </div>
  );
}

/* ---------- taskbar ---------- */

function TaskbarButton({ label, icon, running, active, badge }: { label: string; icon: React.ReactNode; running?: boolean; active?: boolean; badge?: React.ReactNode }) {
  return (
    <button
      aria-label={label}
      className={`relative mx-[2px] grid h-[50px] w-[51px] place-items-center rounded-md border ${active ? "border-white/10 bg-white/5" : "border-transparent"}`}
    >
      {icon}
      {badge}
      {active && <span className="absolute bottom-0 h-1 w-5 rounded-full bg-[#f4805f]" />}
      {running && <span className="absolute bottom-0 h-1 w-2 rounded-full bg-[#a0999e]" />}
    </button>
  );
}

function Taskbar() {
  return (
    <footer className="grid h-[59px] shrink-0 grid-cols-[1fr_auto_1fr] items-center bg-[linear-gradient(90deg,#242228_0%,#242228_13%,#341c1c_18%,#4a1615_22%,#471712_24%,#511715_26.5%,#401326_29%,#2b1c28_33%,#242126_37%,#232127_63%,#2c1c26_70%,#311e20_75%,#2f201e_78%,#36182a_81%,#371733_84%,#371a25_88%,#38191c_93%,#3a171b_100%)] pb-px text-[15px] text-white">
      <button className="relative ml-[25px] flex items-center gap-[9px] justify-self-start pb-1 text-left leading-5">
        <FogIcon />
        <span className="flex flex-col">
          <span>26°C</span>
          <span className="text-[#c4c2c5]">Fog</span>
        </span>
        <span className="absolute -top-0.5 left-[14px] grid size-5 place-items-center rounded-full bg-[#ff99a4] text-sm text-black">1</span>
      </button>

      <div className="flex items-center">
        <TaskbarButton label="Start" icon={<StartIcon />} />
        <label className="mx-1 flex h-10 w-[274px] items-center rounded-full border border-white/20 bg-white/15 pr-2 pl-[13px]">
          <Search size={21} strokeWidth={2} className="shrink-0" />
          <input aria-label="Search" placeholder="Search" className="ml-[11px] min-w-0 flex-1 text-[17px] outline-none placeholder:text-[#d4cfd2]" />
          <ShipIcon />
        </label>
        <TaskbarButton label="Task view" icon={<TaskViewIcon />} />
        <TaskbarButton label="Copilot" icon={<CopilotIcon />} />
        <TaskbarButton label="Edge" icon={<EdgeIcon />} active />
        <TaskbarButton label="MyASUS" icon={<AsusIcon />} />
        <TaskbarButton label="Store" icon={<StoreIcon />} />
        <TaskbarButton label="File Explorer" icon={<ExplorerIcon />} />
        <TaskbarButton label="Brave" icon={<BraveIcon />} />
        <TaskbarButton
          label="Chrome"
          icon={<ChromeIcon />}
          running
          badge={<span className="absolute top-0.5 right-1 grid size-5 place-items-center rounded-full bg-[#07513f] text-xs font-semibold text-[#b5d5cd]">G</span>}
        />
        <TaskbarButton label="Word" icon={<WordIcon />} running />
        <TaskbarButton label="Visual Studio Code" icon={<CodeIcon />} running />
        <TaskbarButton label="Snipping Tool" icon={<SnipIcon />} running />
        <TaskbarButton
          label="WhatsApp"
          icon={<SiWhatsapp size={30} color="#25d366" />}
          running
          badge={<span className="absolute top-0.5 -right-0.5 grid h-5 w-[34px] place-items-center rounded-full bg-[#f4805f] text-sm text-black">99+</span>}
        />
      </div>

      <div className="flex items-center justify-self-end pr-[26px] pb-0.5 text-[15px] leading-5">
        <button aria-label="Show hidden icons">
          <ChevronUp size={20} strokeWidth={2} />
        </button>
        <button aria-label="OneDrive" className="ml-[18px]">
          <OneDriveIcon />
        </button>
        <button className="ml-[21px] w-8 text-center">
          ENG
          <br />
          IN
        </button>
        <button aria-label="Network, sound and battery" className="ml-[21px] flex items-center gap-2.5">
          <WifiIcon />
          <VolumeIcon />
          <BatteryIcon />
        </button>
        <button className="ml-[19px] text-right">
          12:40
          <br />
          13-11-2024
        </button>
        <button aria-label="Notifications" className="ml-[11px]">
          <BellIcon />
        </button>
      </div>
    </footer>
  );
}

export default function App() {
  const [open, setOpen] = useState(true);
  return (
    <div className="relative flex h-screen flex-col overflow-hidden bg-[#3b3b3b] font-['Noto_Sans','Open_Sans',sans-serif]">
      <TabStrip />
      <Toolbar />
      <BookmarksBar />
      <main className="mx-[5px] mb-1.5 flex flex-1 flex-col overflow-hidden rounded-[10px] font-['Liberation_Sans',Arial,sans-serif]">
        <SiteNav />
        <section className="flex-1 bg-[#f3f3f8]">
          <ConferenceForm />
        </section>
      </main>
      <Taskbar />
      {open && <AlertDialog onClose={() => setOpen(false)} />}
    </div>
  );
}
